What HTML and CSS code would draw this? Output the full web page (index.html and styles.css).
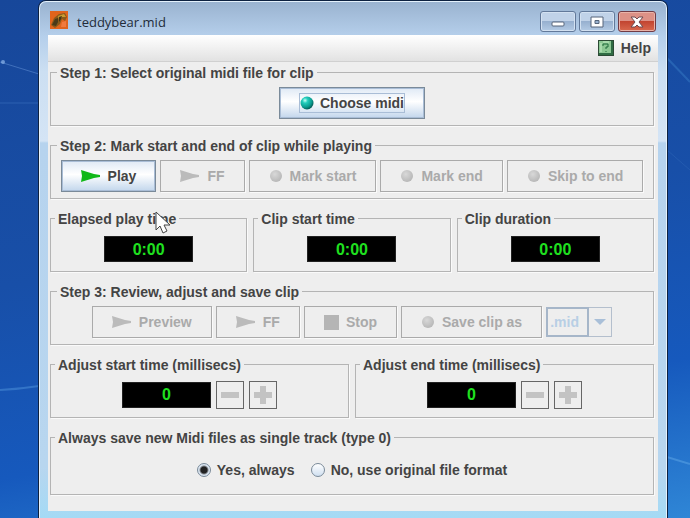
FILE: index.html
```html
<!DOCTYPE html>
<html lang="en">
<head>
    <meta charset="utf-8">
    <title>teddybear.mid</title>
    <link rel="stylesheet" href="styles.css">
</head>
<body>
    <!-- Shared icons -->
    <svg class="sprite" aria-hidden="true">
        <defs>
            <radialGradient id="tealBall" cx="35%" cy="30%" r="70%">
                <stop offset="0" stop-color="#c8fff6"/>
                <stop offset="0.3" stop-color="#23cdbc"/>
                <stop offset="0.75" stop-color="#0a9a8e"/>
                <stop offset="1" stop-color="#056059"/>
            </radialGradient>
            <radialGradient id="greyBall" cx="40%" cy="35%" r="65%">
                <stop offset="0" stop-color="#d8d8d8"/>
                <stop offset="1" stop-color="#b8b8b8"/>
            </radialGradient>
        </defs>
        <symbol id="arrow" viewBox="0 0 19 12">
            <path d="M0 0 L13 4 L19 5 V7 L13 8 L0 12 L1 6 Z" fill="currentColor"/>
        </symbol>
        <symbol id="ball" viewBox="0 0 14 14">
            <circle cx="7" cy="7" r="6" fill="url(#greyBall)"/>
        </symbol>
        <symbol id="minus" viewBox="0 0 20 20">
            <path d="M1 7 H19 V13 H1 Z" fill="#c3c3c3"/>
        </symbol>
        <symbol id="plus" viewBox="0 0 20 20">
            <path d="M7 1 H13 V7 H19 V13 H13 V19 H7 V13 H1 V7 H7 Z" fill="#c3c3c3"/>
        </symbol>
    </svg>

    <!-- Desktop light streaks -->
    <svg class="streaks" viewBox="0 0 690 518" preserveAspectRatio="none" aria-hidden="true">
        <path d="M0 62 L39 74" stroke="#5c8ad0" stroke-opacity="0.6" fill="none"/>
        <circle cx="3" cy="62" r="2" fill="#8fb6ea" fill-opacity="0.7"/>
        <path d="M0 103 H39" stroke="#3f78c4" stroke-opacity="0.5" fill="none"/>
        <path d="M0 390 Q20 389 39 386" stroke="#4f94dc" stroke-opacity="0.5" stroke-width="2" fill="none"/>
        <path d="M667 58 L690 82" stroke="#3f86cc" stroke-opacity="0.4" stroke-width="2" fill="none"/>
        <path d="M667 150 L690 170" stroke="#3f78c4" stroke-opacity="0.3" fill="none"/>
        <path d="M667 457 L690 464" stroke="#5fa8e8" stroke-opacity="0.5" stroke-width="2" fill="none"/>
    </svg>

    <div class="window">
        <header class="titlebar">
            <svg class="app-icon" viewBox="0 0 18 18" aria-hidden="true">
                <rect width="18" height="18" fill="#e0641c"/>
                <path d="M1 14 L4 7 L9 3 L15 2 L17 6 L15 10 L12 8 L10 13 L5 17 Z" fill="#8a5a1a"/>
                <path d="M2 14 L5 8 L8 7 L8 11 L6 15 Z" fill="#4a3a18"/>
                <path d="M8 5 L14 3 L16 6 L12 6 L9 9 Z" fill="#c99a30"/>
                <path d="M9 6 L12 5 L11 8 L9 11 Z" fill="#3f3416"/>
                <path d="M12 11 L16 10 L16 16 L11 16 Z" fill="#f07a3c"/>
            </svg>
            <h1 class="title">teddybear.mid</h1>
            <div class="window-controls">
                <button type="button" class="control" aria-label="Minimize">
                    <svg width="14" height="14" viewBox="0 0 14 14"><rect x="1" y="7" width="12" height="4" rx="1" fill="#fff" stroke="#56657a"/></svg>
                </button>
                <button type="button" class="control" aria-label="Maximize">
                    <svg width="14" height="12" viewBox="0 0 14 12"><path d="M1 1 H13 V11 H1 Z M5 4.5 V7.5 H9 V4.5 Z" fill="#fff" fill-rule="evenodd" stroke="#56657a"/></svg>
                </button>
                <button type="button" class="control close" aria-label="Close">
                    <svg width="14" height="12" viewBox="0 0 14 12"><path d="M1 1 H5 L7 3 L9 1 H13 L9 6 L13 11 H9 L7 9 L5 11 H1 L5 6 Z" fill="#fff" stroke="#6d4a50"/></svg>
                </button>
            </div>
        </header>

        <div class="client">
            <nav class="menubar">
                <button type="button" class="menu-item">
                    <svg width="16" height="16" viewBox="0 0 16 16" aria-hidden="true">
                        <rect x="0.5" y="0.5" width="15" height="15" fill="#8cc793" stroke="#2c4a35"/>
                        <path d="M14 1 V14 H1" fill="none" stroke="#2f6b43" stroke-width="2"/>
                        <path d="M3 3 V12 M5 2 H11" stroke="#c4ecc4" fill="none"/>
                        <path d="M5 6 V4 H10 V7 H8 V9 M8 11 V12" fill="none" stroke="#1f6a3a"/>
                    </svg>
                    Help
                </button>
            </nav>

            <form class="panels">
                <fieldset class="panel">
                    <legend>Step 1: Select original midi file for clip</legend>
                    <div class="row">
                        <button type="button" class="btn primary">
                            <span class="focus">
                                <svg width="14" height="14" viewBox="0 0 14 14" aria-hidden="true"><circle cx="7" cy="7" r="6.5" fill="url(#tealBall)"/></svg>
                                Choose midi
                            </span>
                        </button>
                    </div>
                </fieldset>

                <fieldset class="panel">
                    <legend>Step 2: Mark start and end of clip while playing</legend>
                    <div class="row">
                        <button type="button" class="btn primary play"><svg class="arrow" aria-hidden="true"><use href="#arrow"/></svg>Play</button>
                        <button type="button" class="btn" disabled><svg class="arrow" aria-hidden="true"><use href="#arrow"/></svg>FF</button>
                        <button type="button" class="btn" disabled><svg class="ball" aria-hidden="true"><use href="#ball"/></svg>Mark start</button>
                        <button type="button" class="btn" disabled><svg class="ball" aria-hidden="true"><use href="#ball"/></svg>Mark end</button>
                        <button type="button" class="btn" disabled><svg class="ball" aria-hidden="true"><use href="#ball"/></svg>Skip to end</button>
                    </div>
                </fieldset>

                <div class="columns">
                    <fieldset class="panel">
                        <legend class="near">Elapsed play time</legend>
                        <div class="row"><output class="display">0:00</output></div>
                        <svg class="cursor" viewBox="0 0 16 24" aria-hidden="true">
                            <path d="M1 1 V19 L5 15 L8 22 L12 20 L9 14 H15 Z" fill="#fff" stroke="#444"/>
                        </svg>
                    </fieldset>
                    <fieldset class="panel">
                        <legend class="near">Clip start time</legend>
                        <div class="row"><output class="display">0:00</output></div>
                    </fieldset>
                    <fieldset class="panel">
                        <legend class="near">Clip duration</legend>
                        <div class="row"><output class="display">0:00</output></div>
                    </fieldset>
                </div>

                <fieldset class="panel">
                    <legend>Step 3: Review, adjust and save clip</legend>
                    <div class="row">
                        <button type="button" class="btn" disabled><svg class="arrow" aria-hidden="true"><use href="#arrow"/></svg>Preview</button>
                        <button type="button" class="btn" disabled><svg class="arrow" aria-hidden="true"><use href="#arrow"/></svg>FF</button>
                        <button type="button" class="btn" disabled><span class="square"></span>Stop</button>
                        <button type="button" class="btn" disabled><svg class="ball" aria-hidden="true"><use href="#ball"/></svg>Save clip as</button>
                        <div class="combo">
                            <select aria-label="File extension" disabled>
                                <option>.mid</option>
                            </select>
                            <span class="combo-arrow"></span>
                        </div>
                    </div>
                </fieldset>

                <div class="columns">
                    <fieldset class="panel">
                        <legend class="near">Adjust start time (millisecs)</legend>
                        <div class="row adjust">
                            <input type="text" class="display" value="0" aria-label="Start time in milliseconds" readonly>
                            <button type="button" class="step" aria-label="Decrease start time" disabled><svg><use href="#minus"/></svg></button>
                            <button type="button" class="step" aria-label="Increase start time" disabled><svg><use href="#plus"/></svg></button>
                        </div>
                    </fieldset>
                    <fieldset class="panel">
                        <legend class="near">Adjust end time (millisecs)</legend>
                        <div class="row adjust">
                            <input type="text" class="display" value="0" aria-label="End time in milliseconds" readonly>
                            <button type="button" class="step" aria-label="Decrease end time" disabled><svg><use href="#minus"/></svg></button>
                            <button type="button" class="step" aria-label="Increase end time" disabled><svg><use href="#plus"/></svg></button>
                        </div>
                    </fieldset>
                </div>

                <fieldset class="panel">
                    <legend class="near">Always save new Midi files as single track (type 0)</legend>
                    <div class="row options">
                        <label><input type="radio" name="format" checked>Yes, always</label>
                        <label><input type="radio" name="format">No, use original file format</label>
                    </div>
                </fieldset>
            </form>
        </div>
    </div>
</body>
</html>
```

FILE: styles.css
```css
* {
    box-sizing: border-box;
}

body {
    margin: 0;
    min-height: 100vh;
    padding: 1px 23px 0 39px;
    display: flex;
    font-family: "Liberation Sans", Arial, sans-serif;
    font-size: 14px;
    font-weight: bold;
    color: #444;
    background: linear-gradient(170deg, #17479a 0%, #184fa8 45%, #1659bd 75%, #2f86d6 100%);
}

button,
input,
select {
    font: inherit;
    color: inherit;
}

.sprite {
    position: absolute;
    width: 0;
    height: 0;
}

.streaks {
    position: absolute;
    inset: 0;
    width: 100%;
    height: 100%;
}

/* Window frame */
.window {
    position: relative;
    flex: 1;
    min-width: 0;
    display: flex;
    flex-direction: column;
    padding: 0 8px 7px;
    border: 1px solid #e4f1fc;
    border-bottom: none;
    border-radius: 7px 7px 0 0;
    box-shadow: 0 0 0 1px #0d2140;
    background: linear-gradient(#9ab3d0, #b5cfeb 34px, #ccdff2 70px, #d4e4f5 139px, #b6d3ee 141px, #b8d6ef 90%, #a4daf5);
}

.titlebar {
    display: flex;
    align-items: flex-start;
    height: 33px;
    padding: 9px 2px 0 2px;
}

.app-icon {
    width: 18px;
    height: 18px;
}

.title {
    margin: 0 0 0 9px;
    font-family: "Open Sans", "Noto Sans", sans-serif;
    font-size: 13px;
    font-weight: normal;
    line-height: 22px;
    color: #222c3a;
}

.window-controls {
    display: flex;
    gap: 3px;
    margin-left: auto;
}

.control {
    display: flex;
    align-items: center;
    justify-content: center;
    width: 36px;
    height: 21px;
    padding: 0;
    border: 1px solid #62799a;
    border-radius: 3px;
    box-shadow: inset 0 0 0 1px #d3e1f1;
    background: linear-gradient(#c0d2e8 50%, #97b0cf 50%, #b4cbe5);
}

.control.close {
    width: 38px;
    border-color: #713b45;
    box-shadow: inset 0 0 0 1px #e9b3a9;
    background: linear-gradient(#dd9186 50%, #c24531 50%, #d9694f);
}

.client {
    flex: 1;
    background: #eee;
}

.menubar {
    display: flex;
    justify-content: flex-end;
    height: 27px;
    padding-right: 7px;
    border-bottom: 1px solid #d0d0d0;
    background: linear-gradient(#fff, #e2e2e2);
}

.menu-item {
    display: flex;
    align-items: center;
    gap: 7px;
    padding: 0;
    border: none;
    background: none;
}

/* Titled panels */
.panels {
    display: flex;
    flex-direction: column;
    gap: 11px;
    padding: 2px 4px 15px 2px;
}

.columns {
    display: flex;
    gap: 6px;
}

.columns .panel {
    flex: 1;
}

.panel {
    position: relative;
    min-width: 0;
    margin: 0;
    padding: 7px 4px 6px;
    border: 1px solid #b4b4b4;
    box-shadow: 1px 1px 0 #fafafa;
}

legend {
    height: 16px;
    margin-left: 2px;
    padding: 0 3px;
    line-height: 18px;
    white-space: nowrap;
}

legend.near {
    margin-left: 0;
}

.row {
    display: flex;
    align-items: center;
    justify-content: center;
    gap: 4px;
    height: 32px;
}

/* Buttons */
.btn {
    display: flex;
    align-items: center;
    gap: 7px;
    height: 32px;
    padding: 0 19px;
    border: 1px solid #aaa;
    box-shadow: 1px 1px 0 #fafafa;
    white-space: nowrap;
    background: #eee;
}

.btn:disabled {
    color: #aaa;
}

.btn.primary {
    border-color: #7a8a99;
    box-shadow: inset 0 0 0 1px #a9bdd6;
    background: linear-gradient(#dfe9f5, #fff 45%, #c2d6ec);
}

.focus {
    display: flex;
    align-items: center;
    gap: 6px;
    height: 20px;
    border: 1px solid #a9bdd6;
}

.arrow {
    width: 19px;
    height: 12px;
    margin-right: 1px;
    color: #bbb;
}

.play .arrow {
    color: #10b818;
}

.ball {
    width: 14px;
    height: 14px;
}

.square {
    width: 15px;
    height: 15px;
    background: #b5b5b5;
}

.combo {
    display: grid;
    grid-template-columns: 43px 23px;
    height: 30px;
}

.combo select {
    grid-area: 1 / 1 / 2 / 3;
    appearance: none;
    padding: 0 3px;
    border: 1px solid #b4bfcd;
    border-radius: 0;
    background: #eee;
    color: #b8cfe5;
    opacity: 1;
}

.combo-arrow {
    grid-area: 1 / 1 / 2 / 3;
    display: flex;
    align-items: center;
    justify-content: flex-end;
    width: 43px;
    border: 2px solid #a6b6c9;
    pointer-events: none;
}

.combo-arrow::after {
    content: "";
    flex: none;
    margin-right: -19px;
    border: 6px solid transparent;
    border-top-color: #a9bfd8;
    border-bottom: none;
}

/* Time displays */
.display {
    width: 89px;
    height: 26px;
    padding: 0;
    border: 1px solid #222;
    font-size: 16px;
    line-height: 26px;
    text-align: center;
    color: #1fe01f;
    background: #000;
}

.adjust {
    gap: 5px;
}

.step {
    display: flex;
    align-items: center;
    justify-content: center;
    width: 28px;
    height: 28px;
    padding: 0;
    border: 1px solid #666;
    background: #eee;
}

.step svg {
    width: 20px;
    height: 20px;
}

.options {
    gap: 16px;
    height: 36px;
}

.options label {
    display: flex;
    align-items: center;
    gap: 6px;
}

.options input {
    appearance: none;
    width: 14px;
    height: 14px;
    margin: 0;
    border: 1px solid #7a8a99;
    border-radius: 50%;
    background: linear-gradient(#fff, #cfdff0);
}

.options input:checked {
    background: radial-gradient(circle, #222 3px, #dbe6f2 5px);
}

/* Mouse pointer resting over the elapsed time title */
.cursor {
    position: absolute;
    top: -15px;
    left: 104px;
    width: 16px;
    height: 24px;
}
```
